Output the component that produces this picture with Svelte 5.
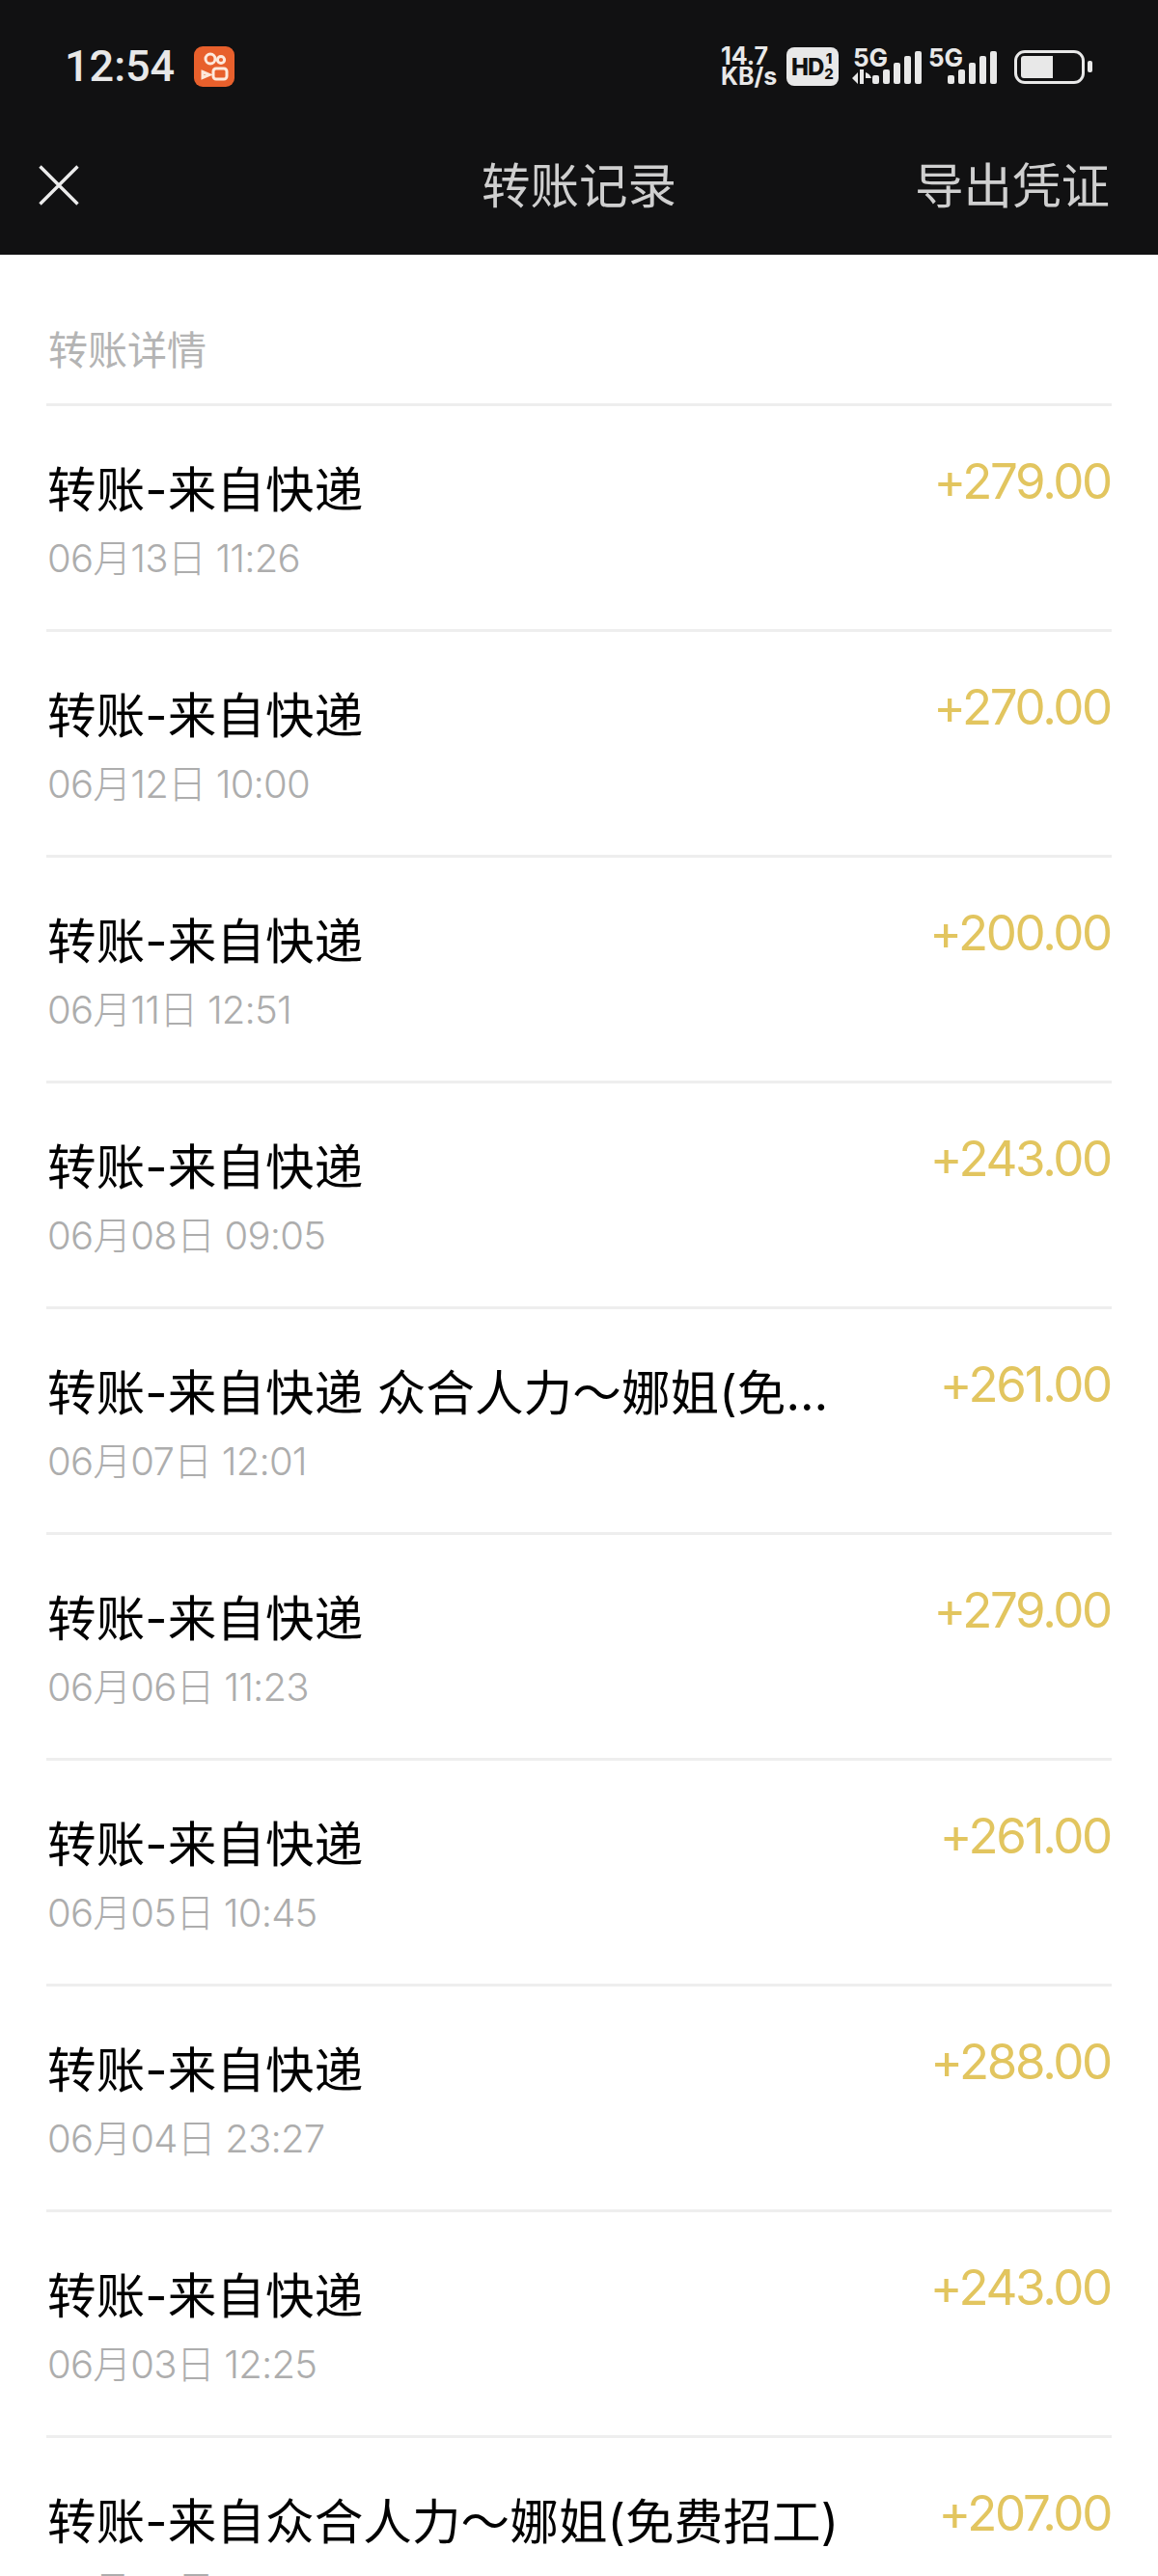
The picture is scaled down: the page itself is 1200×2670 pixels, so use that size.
<script>
	const rows = [
		{ title: "转账-来自快递", date: "06月13日 11:26", amount: "+279.00" },
		{ title: "转账-来自快递", date: "06月12日 10:00", amount: "+270.00" },
		{ title: "转账-来自快递", date: "06月11日 12:51", amount: "+200.00" },
		{ title: "转账-来自快递", date: "06月08日 09:05", amount: "+243.00" },
		{ title: "转账-来自快递 众合人力～娜姐(免费招工)", date: "06月07日 12:01", amount: "+261.00" },
		{ title: "转账-来自快递", date: "06月06日 11:23", amount: "+279.00" },
		{ title: "转账-来自快递", date: "06月05日 10:45", amount: "+261.00" },
		{ title: "转账-来自快递", date: "06月04日 23:27", amount: "+288.00" },
		{ title: "转账-来自快递", date: "06月03日 12:25", amount: "+243.00" },
		{ title: "转账-来自众合人力～娜姐(免费招工)", date: "06月02日 12:11", amount: "+207.00" }
	];

	const bars = [
		{ x: 0, h: 9 },
		{ x: 11, h: 15 },
		{ x: 22, h: 22 },
		{ x: 33, h: 29 },
		{ x: 44, h: 34 }
	];
</script>

<div class="page">
	<header class="head">
		<div class="status">
			<div class="status-left">
				<span class="time">12:54</span>
				<svg class="app-icon" viewBox="0 0 42 42" width="42" height="42">
					<rect width="42" height="42" rx="9" fill="#e8602c" />
					<g fill="none" stroke="#fde9dc" stroke-width="3">
						<circle cx="17" cy="13" r="5" />
						<circle cx="28" cy="14" r="3.6" />
						<rect x="20" y="23" width="14" height="11" rx="3" />
						<path d="M9 26.5l7 3-7 3z" />
					</g>
				</svg>
			</div>
			<div class="status-right">
				<div class="speed"><span>14.7</span><span>KB/s</span></div>
				<div class="hd">
					<span class="hd-text">HD</span>
					<span class="hd-sim"><span>1</span><span>2</span></span>
				</div>
				<div class="signal first">
					<span class="net">5G</span>
					<svg width="74" height="34" viewBox="0 0 74 34">
						<path d="M0 28l6-6v12zM8 19h4v15H8zM14 22c3 1 5 3 6 6h-6z" fill="#e8e8e8" />
						{#each bars as b}
							<rect x={b.x + 21} y={34 - b.h} width="7" height={b.h} rx="2" fill="#e8e8e8" />
						{/each}
					</svg>
				</div>
				<div class="signal second">
					<span class="net">5G</span>
					<svg width="52" height="34" viewBox="0 0 52 34">
						{#each bars as b}
							<rect x={b.x} y={34 - b.h} width="7" height={b.h} rx="2" fill="#e8e8e8" />
						{/each}
					</svg>
				</div>
				<div class="battery"><div class="level"></div></div>
				<div class="nub"></div>
			</div>
		</div>
		<nav class="nav">
			<svg class="close" viewBox="0 0 42 42" width="42" height="42">
				<path d="M1.500 1.500L40.500 40.500M40.500 1.500L1.500 40.500" stroke="#ececec" stroke-width="3.400" />
			</svg>
			<div class="nav-title">转账记录</div>
			<div class="nav-action">导出凭证</div>
		</nav>
	</header>

	<main class="list">
		<div class="label">转账详情</div>
		{#each rows as row}
			<div class="row">
				<div class="info">
					<div class="title">{row.title}</div>
					<div class="date">{row.date}</div>
				</div>
				<div class="amount">{row.amount}</div>
			</div>
		{/each}
	</main>
</div>

<style>
	:global(body) {
		margin: 0;
		background: #fff;
	}

	.page {
		width: 1200px;
		height: 2670px;
		overflow: hidden;
		font-family: "Noto Sans CJK SC", sans-serif;
	}

	.head {
		background: #111112;
		height: 264px;
		box-sizing: border-box;
	}

	.status {
		height: 136px;
		display: flex;
		justify-content: space-between;
		align-items: flex-start;
		padding: 48px 68px 0 67px;
		box-sizing: border-box;
		color: #e8e8e8;
		font-family: Inter, sans-serif;
	}

	.status-left {
		display: flex;
		align-items: center;
		gap: 20px;
	}

	.time {
		font-family: Roboto, sans-serif;
		font-size: 45px;
		font-weight: 500;
		line-height: 42px;
	}

	.status-right {
		display: flex;
		align-items: flex-start;
	}

	.speed {
		display: flex;
		flex-direction: column;
		font-size: 25px;
		font-weight: 700;
		line-height: 21px;
		width: 68px;
	}

	.hd {
		width: 54px;
		height: 40px;
		margin-top: 1px;
		background: #e8e8e8;
		border-radius: 8px;
		color: #111;
		font-weight: 800;
		display: flex;
		align-items: center;
		justify-content: center;
		gap: 1px;
	}

	.hd-text {
		font-size: 24px;
		letter-spacing: -1px;
	}

	.hd-sim {
		display: flex;
		flex-direction: column;
		font-size: 15px;
		line-height: 16px;
		text-align: center;
	}

	.signal {
		position: relative;
		padding-top: 5px;
	}

	.first {
		margin-left: 14px;
		width: 80px;
	}

	.second {
		width: 71px;
		display: flex;
		justify-content: flex-end;
	}

	.net {
		position: absolute;
		top: -4px;
		font-size: 26px;
		font-weight: 700;
	}

	.first .net {
		left: 1px;
	}

	.second .net {
		left: -1px;
	}

	.battery {
		width: 73px;
		height: 35px;
		margin-top: 4px;
		margin-left: 17px;
		border: 3px solid #e8e8e8;
		border-radius: 11px;
		box-sizing: border-box;
		padding: 3px 4px;
	}

	.level {
		width: 33px;
		height: 23px;
		background: #e8e8e8;
		border-radius: 3px 0 0 3px;
	}

	.nub {
		width: 5px;
		height: 12px;
		margin: 15px 0 0 3px;
		background: #e8e8e8;
		border-radius: 2px;
	}

	.nav {
		display: grid;
		grid-template-columns: 1fr auto 1fr;
		align-items: center;
		padding: 0 50px;
		height: 112px;
	}

	.close {
		display: block;
		margin-left: -10px;
	}

	.nav-title,
	.nav-action {
		font-size: 50.500px;
		line-height: 60px;
		padding-bottom: 6px;
		color: #cfcfcf;
		font-weight: 400;
	}

	.nav-action {
		text-align: right;
	}

	.list {
		padding: 0 48px;
	}

	.label {
		height: 154px;
		box-sizing: border-box;
		padding: 68px 0 0 2px;
		font-size: 41px;
		line-height: 56px;
		color: #b4b4b4;
	}

	.row {
		height: 234px;
		box-sizing: border-box;
		border-top: 3px solid #eeeeee;
		display: flex;
		justify-content: space-between;
		align-items: flex-start;
		padding: 0 1px;
	}

	.info {
		width: 830px;
		padding-top: 52px;
	}

	.title {
		font-family: Inter, "Noto Sans CJK SC", sans-serif;
		font-size: 50.500px;
		letter-spacing: 0.150px;
		line-height: 70px;
		color: #000;
		white-space: nowrap;
		overflow: hidden;
		text-overflow: ellipsis;
	}

	.date {
		margin-top: 8px;
		font-size: 40px;
		line-height: 56px;
		letter-spacing: -0.800px;
		color: #adadad;
		font-family: Inter, "Noto Sans CJK SC", sans-serif;
		font-weight: 300;
	}

	.amount {
		padding-top: 48px;
		font-size: 51px;
		line-height: 60px;
		letter-spacing: -2.300px;
		color: #e2c55f;
		font-family: Inter, sans-serif;
	}
</style>
